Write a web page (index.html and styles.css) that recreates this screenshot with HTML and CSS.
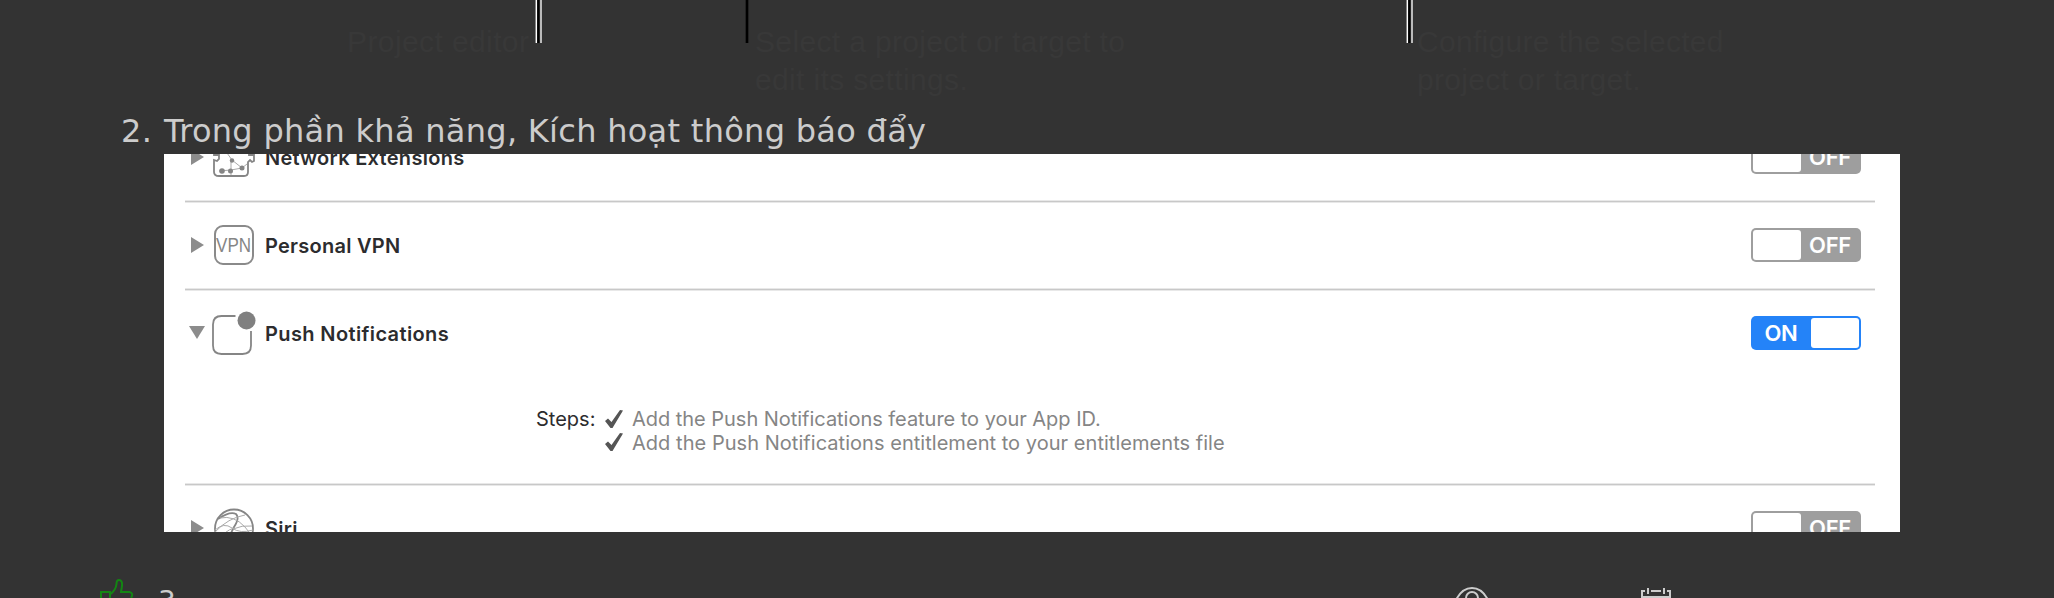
FILE: index.html
```html
<!DOCTYPE html>
<html lang="vi">
<head>
<meta charset="utf-8">
<title>Push Notifications</title>
<link rel="stylesheet" href="styles.css">
</head>
<body>
<main class="page">
  <section class="diagram">
    <div class="label label-editor"><p>Project editor</p><i class="leader leader-light"></i></div>
    <div class="label label-select"><i class="leader"></i><p>Select a project or target to<br>edit its settings.</p></div>
    <div class="label label-config"><i class="leader leader-light"></i><p>Configure the selected<br>project or target.</p></div>
  </section>
  <h2 class="step"><span class="step-number">2.</span><span class="step-title">Trong phần khả năng, Kích hoạt thông báo đẩy</span></h2>
  <section class="panel">
    <div class="row row-first">
      <div class="head">
        <svg class="arrow" viewBox="0 0 16 16"><path d="M1 0L14 8L1 16Z"/></svg>
        <svg class="icon icon-network" viewBox="0 0 44 44"><path d="M7 4H16V1H23V4H32Q37 4 37 9V20H42V26L40 27L38 25L36 27V37Q36 41 32 41H7Q2 41 2 37V25L5 26L7 24V20H2V9Q2 4 7 4Z"/><path class="thin" d="M7 36L19 35L30 33L20 25L15 18M19 26V40M30 33L35 29"/><g class="dots"><circle cx="10" cy="36" r="2.8"/><circle cx="18.500" cy="36" r="2.500"/><circle cx="30" cy="33" r="2.500"/><circle cx="20" cy="25.500" r="2.200"/></g></svg>
        <span class="name name-network">Network Extensions</span>
        <span class="toggle"><i class="knob"></i><b>OFF</b></span>
      </div>
    </div>
    <div class="row">
      <div class="head">
        <svg class="arrow" viewBox="0 0 16 16"><path d="M1 0L14 8L1 16Z"/></svg>
        <span class="icon icon-vpn"><span>VPN</span></span>
        <span class="name name-vpn">Personal VPN</span>
        <span class="toggle"><i class="knob"></i><b>OFF</b></span>
      </div>
    </div>
    <div class="row row-push">
      <div class="head">
        <svg class="arrow" viewBox="0 0 16 16"><path d="M-1 1H15L7 14Z"/></svg>
        <svg class="icon icon-push" viewBox="0 0 44 44"><path d="M23.500 5H9.500Q1 5 1 13.500V34.500Q1 43 9.500 43H30.500Q39 43 39 34.500V20"/><circle cx="34.500" cy="9.500" r="9"/></svg>
        <span class="name name-push">Push Notifications</span>
        <span class="toggle toggle-on"><b>ON</b><i class="knob"></i></span>
      </div>
      <div class="steps">
        <span class="steps-label">Steps:</span>
        <ul>
          <li><svg class="check" viewBox="0 0 20 20"><path d="M1 11L4 8.500L7.500 12L16 0L19 .5L8.500 18H6.500Z"/></svg><span class="feature">Add the Push Notifications feature to your App ID.</span></li>
          <li><svg class="check" viewBox="0 0 20 20"><path d="M1 11L4 8.500L7.500 12L16 0L19 .5L8.500 18H6.500Z"/></svg><span class="entitle">Add the Push Notifications entitlement to your entitlements file</span></li>
        </ul>
      </div>
    </div>
    <div class="row row-last">
      <div class="head">
        <svg class="arrow" viewBox="0 0 16 16"><path d="M1 0L14 8L1 16Z"/></svg>
        <svg class="icon icon-siri" viewBox="0 0 44 44"><circle cx="22" cy="22.500" r="19"/><path d="M6 13Q18 5 24 8Q28 12 22 21Q19 27 14 38"/><path class="thin" d="M3 24Q12 16 20 22T41 24M8 12Q22 9 33 21T34 35M3 26Q16 12 33 9M21 23Q30 19 40 20M8 34Q12 25 22 22"/></svg>
        <span class="name">Siri</span>
        <span class="toggle"><i class="knob"></i><b>OFF</b></span>
      </div>
    </div>
  </section>
  <footer class="footer">
    <svg class="thumb" viewBox="0 0 36 36"><path d="M3 15H12V35H3ZM12 17.500Q18 13 18.500 7Q18.500 3 21 3Q24.500 3 24 9L23 15H31.500Q35.500 16 33.500 20V35H12"/></svg>
    <span class="votes">3</span>
    <svg class="eye" viewBox="0 0 36 30"><path d="M2 14Q8 2 18 2T34 14Q28 27 18 27T2 14Z"/><circle cx="18" cy="12" r="6"/></svg>
    <svg class="calendar" viewBox="0 0 32 32"><path d="M5 4H2V30H30V4H27M11 4H21M8 1V7M24 1V7M2 10H30"/></svg>
  </footer>
</main>
</body>
</html>
```

FILE: styles.css
```css
* { box-sizing: border-box; }
body { margin: 0; background: #333; }
p, h2, ul { margin: 0; padding: 0; }
svg { display: block; flex: none; overflow: visible; }
.page { height: 598px; overflow: hidden; }

.diagram { display: flex; height: 108px; color: #383838; font: 30px/38px "Liberation Sans", Arial, sans-serif; }
.diagram p { padding-top: 23px; white-space: nowrap; }
.label { display: flex; align-items: flex-start; }
.label-editor { width: 745px; padding-left: 347px; }
.label-editor p { width: 188px; letter-spacing: .4px; }
.label-select { width: 661px; }
.label-select p { padding-left: 6px; letter-spacing: .35px; }
.label-config p { padding-left: 4px; letter-spacing: .3px; }
.leader { width: 4px; height: 42.500px; background: #000; border: solid #222; border-width: 0 1px; }
.leader-light { width: 7px; border: 0; background: linear-gradient(90deg, #888 0 1px, #fff 1px 2px, #111 2px 3px, #000 3px 4px, #222 4px 5px, #bbb 5px 7px); }

.step { display: flex; height: 46px; padding-left: 121px; color: #ccc; font: 400 32px/46px "DejaVu Sans", Verdana, sans-serif; white-space: nowrap; letter-spacing: .29px; }
.step-number { width: 43px; }

.panel { width: 1736px; height: 378px; margin-left: 164px; padding: 0 25px 0 21px; background: #fff; overflow: hidden; font-family: Inter, sans-serif; }
.row { height: 88px; border-bottom: 1px solid #c8c8c8; box-shadow: 0 1px #e8e8e8, inset 0 -1px #e8e8e8; }
.row-first { display: flex; height: 48px; align-items: flex-end; overflow: hidden; }
.row-push { height: 195px; }
.row-last { border: 0; box-shadow: none; }
.head { display: flex; width: 100%; height: 87px; flex: none; align-items: center; padding: 0 14px 2px 5px; }
.arrow { width: 16px; height: 16px; margin-right: 6px; fill: #8c8c8c; }
.icon { width: 44px; height: 44px; fill: none; stroke: #858585; stroke-width: 1.800; }
.thin { stroke: #aaa; stroke-width: 1; }
.dots { fill: #858585; stroke: none; }
.icon-vpn { display: flex; width: 40px; height: 40px; margin: 1px 2px 0; align-items: center; justify-content: center; border: 2px solid #8a8a8a; border-radius: 9px; color: #858585; font: 20px/36px "Liberation Sans", sans-serif; }
.icon-vpn span { transform: scaleX(.85); }
.icon-push circle { fill: #808080; stroke: none; }
.name { margin: 2px auto 0 9px; color: #2c2c2e; font-size: 20px; font-weight: 600; line-height: 26px; letter-spacing: .3px; white-space: nowrap; }
.name-push { letter-spacing: .38px; }
.name-vpn { letter-spacing: .25px; }
.toggle { display: flex; width: 110px; height: 34px; padding: 2px; align-items: center; border-radius: 5px; background: #9e9e9e; color: #fff; }
.toggle b { flex: 1; text-align: center; font-size: 22px; line-height: 30px; font-weight: 600; letter-spacing: -.3px; }
.knob { width: 48px; height: 30px; border-radius: 3px; background: #fff; }
.toggle-on { background: #2483f8; }
.toggle-on b { padding-right: 2px; }
.steps { display: flex; padding: 31px 0 0 351px; font-size: 20px; line-height: 23.500px; white-space: nowrap; }
.steps-label { width: 68px; color: #2c2c2e; }
.steps li { display: flex; align-items: center; color: #858585; }
.check { width: 20px; height: 20px; margin-right: 8px; fill: #555; }
.feature { letter-spacing: -.03px; }
.entitle { letter-spacing: .04px; }

.footer { display: flex; height: 66px; padding: 45px 0 0 98px; color: #ccc; }
.footer svg { fill: none; stroke: #ccc; stroke-width: 2; }
.footer .thumb { width: 36px; height: 36px; stroke: #138613; }
.votes { width: 1295px; padding: 8px 0 0 24px; font: 28px/34px "DejaVu Sans", Verdana, sans-serif; }
.eye { width: 36px; height: 30px; margin: 9px 0 0 25px; }
.calendar { width: 32px; height: 32px; margin: 10px 0 0 150px; }
```
